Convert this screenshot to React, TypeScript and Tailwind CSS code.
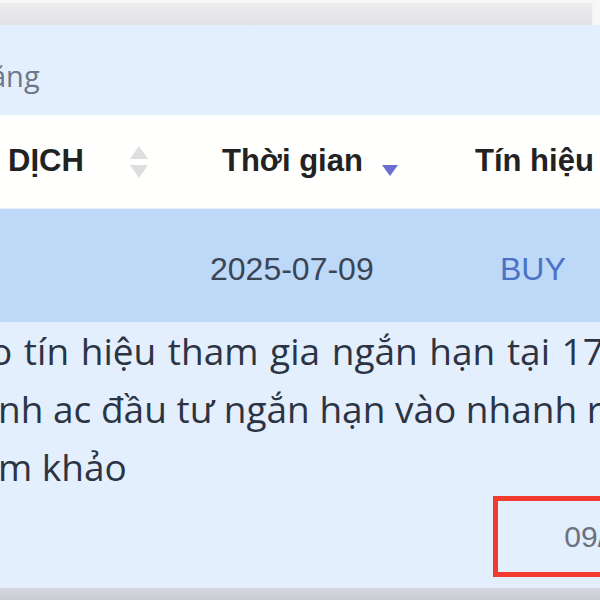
import React from "react";

export default function App() {
  return (
    <div className="w-[600px] h-[600px] overflow-hidden bg-[#f7f7f8] flex flex-col font-['Liberation_Sans',Arial,sans-serif]">
      <div className="h-[3px] shrink-0 bg-[#f7f7f8]" />
      <div className="h-[22px] shrink-0 bg-gradient-to-b from-[#ececee] to-[#e2e2e4] border-r-[2px] border-[#f4f4f5] mr-[6px]" />
      <div className="flex-1 flex flex-col bg-[#e3effd] overflow-hidden">
        <div className="h-[90px] shrink-0 flex items-center overflow-hidden">
          <span className="-ml-[10px] pt-[12px] text-[29px] text-[#6e7787] font-['Open_Sans',sans-serif] whitespace-nowrap">ằng</span>
        </div>
        <div className="h-[93px] shrink-0 bg-[#fffffe] flex items-center text-[31px] font-bold text-[#222] whitespace-nowrap">
          <div className="w-[217px] shrink-0 flex items-center pl-[8px]">
            <span>DỊCH</span>
            <span className="ml-[45px] flex flex-col items-center gap-[4px]">
              <svg width="20" height="15" viewBox="0 0 20 15"><path d="M10 1 L19 14 L1 14 Z" fill="#dedede" /></svg>
              <svg width="20" height="15" viewBox="0 0 20 15"><path d="M1 1 L19 1 L10 14 Z" fill="#dedede" /></svg>
            </span>
          </div>
          <div className="w-[258px] shrink-0 flex items-center pl-[5px]">
            <span>Thời gian</span>
            <svg className="ml-[18px] mt-[18px]" width="18" height="13" viewBox="0 0 18 13"><path d="M1 1 L17 1 L9 12 Z" fill="#6a6fcf" /></svg>
          </div>
          <div className="shrink-0">Tín hiệu</div>
        </div>
        <div className="h-[114px] shrink-0 bg-[#bed8f8] border-t border-[#e8f0fb] flex items-center pt-[6px] text-[32px] whitespace-nowrap">
          <div className="w-[210px] shrink-0" />
          <div className="w-[290px] shrink-0 text-[#3a4556]">2025-07-09</div>
          <div className="text-[#4c72c6]">BUY</div>
        </div>
        <div className="flex-1 flex flex-col overflow-hidden">
          <div className="font-['Open_Sans',sans-serif] text-[37px] leading-[58px] text-[#2c3444] whitespace-nowrap">
            <div className="-ml-[10px] [word-spacing:2px]">o tín hiệu tham gia ngắn hạn tại 17</div>
            <div className="-ml-[2px] [word-spacing:0px]">nh ac đầu tư ngắn hạn vào nhanh r</div>
            <div className="-ml-[2px]">m khảo</div>
          </div>
          <div className="flex justify-end">
            <div className="w-[107px] h-[81px] border-[5px] border-r-0 border-[#f23a2e] flex items-center justify-end overflow-hidden">
              <span className="text-[30px] text-[#6b7280] whitespace-nowrap -mr-[6px]">09/</span>
            </div>
          </div>
        </div>
      </div>
      <div className="h-[12px] shrink-0 bg-gradient-to-b from-[#d6d8de] to-[#c9ccd3]" />
    </div>
  );
}
